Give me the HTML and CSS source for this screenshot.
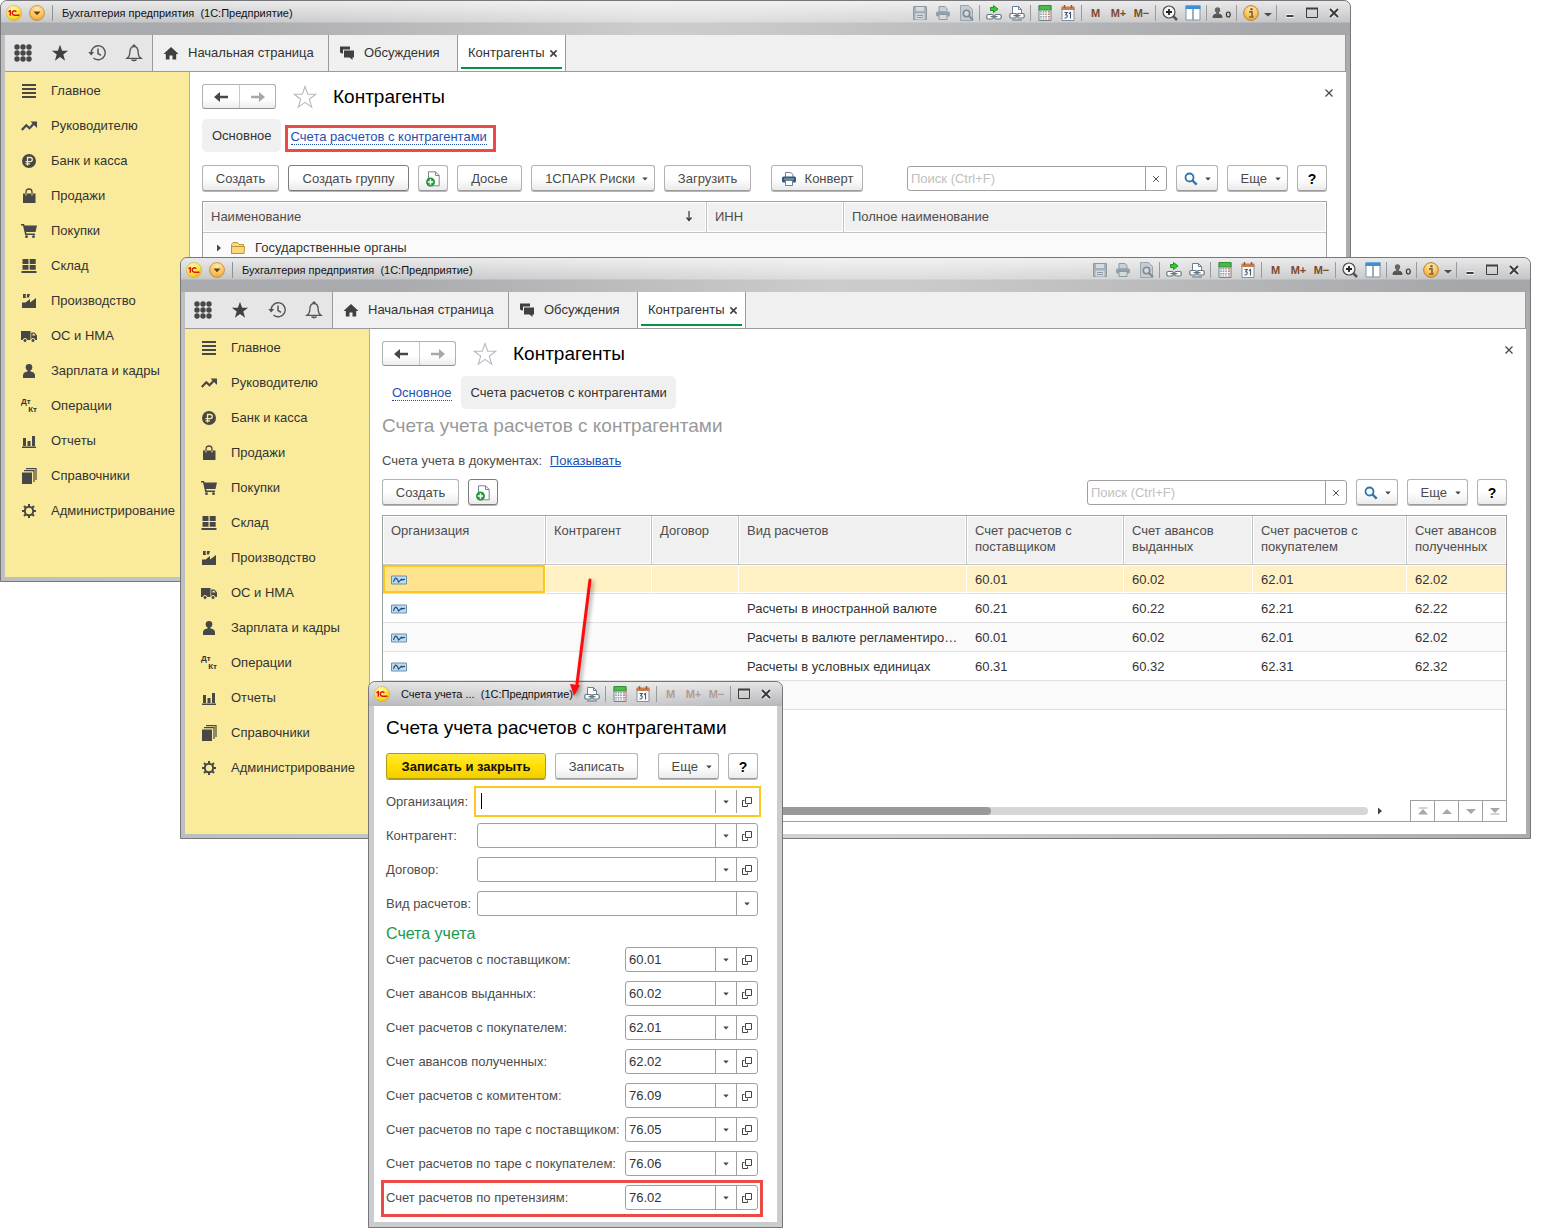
FILE: index.html
```html
<!DOCTYPE html>
<html lang="ru">
<head>
<meta charset="utf-8">
<meta name="viewport" content="width=device-width, initial-scale=1">
<title>Бухгалтерия предприятия (1С:Предприятие)</title>
<link rel="stylesheet" href="styles.css">
</head>
<body>
<svg class="sprite" aria-hidden="true">
  <defs>
    <radialGradient id="g-yellow" cx="40%" cy="30%" r="75%"><stop offset="0" stop-color="#fffbc0"/><stop offset=".6" stop-color="#fde43c"/><stop offset="1" stop-color="#e9b800"/></radialGradient>
    <radialGradient id="g-orange" cx="50%" cy="25%" r="80%"><stop offset="0" stop-color="#ffe9b0"/><stop offset=".6" stop-color="#fbc25a"/><stop offset="1" stop-color="#e89c2c"/></radialGradient>
  </defs>
  <symbol id="logo" viewBox="0 0 16 16"><circle cx="8" cy="8" r="7.6" fill="url(#g-yellow)" stroke="#c9a94a" stroke-width=".5"/><path d="M2.400 6.600 4.300 5.700V10.800M10.300 6.900A2.200 2.200 0 1 0 8.500 10.200H13.500" fill="none" stroke="#e0150c" stroke-width="1.500"/></symbol>
  <symbol id="menu-down" viewBox="0 0 16 16"><circle cx="8" cy="8" r="7.5" fill="url(#g-orange)" stroke="#b98632" stroke-width=".7"/><path d="M4.500 6.500h7L8 10.200z" fill="#6b3d10"/></symbol>
  <symbol id="save" viewBox="0 0 16 16"><path d="M1.5 1.5h13v13h-13z" fill="#a5b2bb" stroke="#8d9aa4"/><path d="M4 2h8v4H4z" fill="#d5dadd"/><path d="M3.500 8.500h9v6h-9z" fill="#d5dadd"/><path d="M5 10.500h6M5 12.500h6" stroke="#8d9aa4"/></symbol>
  <symbol id="print-off" viewBox="0 0 16 16"><path d="M4 1.500h6l2 2V7H4z" fill="#c9cfd3" stroke="#8d9aa4"/><rect x="1" y="6.500" width="14" height="5" rx="1.500" fill="#93a1ab"/><path d="M4 9.500h8v5H4z" fill="#d5dadd" stroke="#8d9aa4"/></symbol>
  <symbol id="preview" viewBox="0 0 16 16"><path d="M2.500.5h8l4 4v11h-12z" fill="#c6cdd2" stroke="#9aa6af"/><circle cx="8.500" cy="8.500" r="3.200" fill="#d5dadd" stroke="#7d8b96" stroke-width="1.600"/><path d="m11 11 4 4" stroke="#7d8b96" stroke-width="2"/></symbol>
  <symbol id="link-add" viewBox="0 0 16 16"><path d="M4.500 2.500h3V.5L12 4 7.500 7.500v-2h-3z" fill="#2bd02b" stroke="#0c7a12" stroke-width=".8"/><rect x=".8" y="9.500" width="6.500" height="4.500" rx="1.500" fill="#fff" stroke="#647681" stroke-width="1.200"/><rect x="8.700" y="9.500" width="6.500" height="4.500" rx="1.500" fill="#fff" stroke="#647681" stroke-width="1.200"/><path d="M4.500 11.700h7" stroke="#647681" stroke-width="1.200"/></symbol>
  <symbol id="print-link" viewBox="0 0 16 16"><path d="M3.500 9V1.500h6l3 3V9z" fill="#fff" stroke="#6f7f92"/><path d="M9.500 1.500v3h3" fill="none" stroke="#6f7f92"/><rect x=".8" y="8.500" width="6.500" height="4.500" rx="1.500" fill="#fff" stroke="#647681" stroke-width="1.200"/><rect x="8.700" y="8.500" width="6.500" height="4.500" rx="1.500" fill="#fff" stroke="#647681" stroke-width="1.200"/><path d="M4.500 10.700h7M3 15h10" stroke="#647681" stroke-width="1.200"/></symbol>
  <symbol id="calc" viewBox="0 0 16 16"><path d="M2 .5h12v15H2z" fill="#f4f6f7" stroke="#75838c"/><path d="M2 .5h12V5H2z" fill="#4eb84c" stroke="#2f9233"/><path d="M4 6v8.500M6.500 6v8.500M9 6v8.500" stroke="#8a98a1" stroke-width="1.500" stroke-dasharray="1.500 1"/><path d="M12 6v8.500" stroke="#df4f42" stroke-width="1.500" stroke-dasharray="1.500 1"/></symbol>
  <symbol id="calendar" viewBox="0 0 16 16"><path d="M2 2.500h12v13H2z" fill="#f7f9fb" stroke="#8094a8"/><path d="M1.500 1.500h13V5h-13z" fill="#c77e4f"/><path d="M4.500 0v3M11.500 0v3" stroke="#9a5a34" stroke-width="1.500"/><path d="M4.500 7.500h2.700l-1.500 2.200q1.800 0 1.500 1.800T4.500 13M9 8.500l1.500-1V13.500" fill="none" stroke="#46586a" stroke-width="1.100"/></symbol>
  <symbol id="zoom" viewBox="0 0 16 16"><circle cx="7" cy="7" r="6" fill="#f4f4f4" stroke="#4a4a4a" stroke-width="1.200"/><path d="M7 4v6M4 7h6" stroke="#222" stroke-width="1.800"/><path d="m11.500 11.500 3.500 3.500" stroke="#555" stroke-width="2.500"/></symbol>
  <symbol id="split" viewBox="0 0 16 16"><path d="M1 1h14v14H1z" fill="#fff" stroke="#7d93a6"/><path d="M.5.5h15V4H.5z" fill="#3e8fd8"/><path d="M8 4v11" stroke="#7d93a6" stroke-width="1.500"/></symbol>
  <symbol id="user-off" viewBox="0 0 20 16"><circle cx="5.500" cy="5" r="2.700" fill="#666"/><path d="M4.500 7h2v2q3.500.5 3.500 2.500v1H1v-1Q1 9.500 4.500 9z" fill="#555" stroke="#555"/><path d="M4 5h3v4.500H4z" fill="#666"/><ellipse cx="16.300" cy="9.500" rx="1.900" ry="2.500" fill="none" stroke="#3a3020" stroke-width="1.200"/></symbol>
  <symbol id="info" viewBox="0 0 16 16"><circle cx="8" cy="8" r="7.400" fill="url(#g-orange)" stroke="#b98632"/><circle cx="8.500" cy="4.300" r="1.300" fill="#7c6a45"/><path d="M6 6.800h3v4.700h1.500M6 12h4.500" fill="none" stroke="#7c6a45" stroke-width="1.700"/></symbol>
  <symbol id="tiny-down" viewBox="0 0 8 8"><path d="M0 4h8L4 7.500z" fill="#4a4a4a"/></symbol>
  <symbol id="win-min" viewBox="0 0 16 16"><path d="M4 11h8" stroke="#f2f2f2" stroke-width="4"/><path d="M4.500 11h7" stroke="#3e3e3e" stroke-width="2"/></symbol>
  <symbol id="win-max" viewBox="0 0 16 16"><path d="M2.500 3.500h11v9h-11z" fill="none" stroke="#3e3e3e"/><path d="M2 3.500h12" stroke="#3e3e3e" stroke-width="2"/></symbol>
  <symbol id="win-close" viewBox="0 0 16 16"><path d="m4 4 8 8m0-8-8 8" stroke="#f2f2f2" stroke-width="4"/><path d="m4 4 8 8m0-8-8 8" stroke="#3e3e3e" stroke-width="2.200"/></symbol>

  <symbol id="apps" viewBox="0 0 18 18"><g fill="#474747"><circle cx="3" cy="3" r="2.700"/><circle cx="9" cy="3" r="2.700"/><circle cx="15" cy="3" r="2.700"/><circle cx="3" cy="9" r="2.700"/><circle cx="9" cy="9" r="2.700"/><circle cx="15" cy="9" r="2.700"/><circle cx="3" cy="15" r="2.700"/><circle cx="9" cy="15" r="2.700"/><circle cx="15" cy="15" r="2.700"/></g></symbol>
  <symbol id="star" viewBox="0 0 18 18"><path d="m9 .8 2.100 6h6l-4.800 3.800 1.800 6.200L9 13.100l-5.100 3.700 1.800-6.200L.9 6.800h6z" fill="#404040"/></symbol>
  <symbol id="clock" viewBox="0 0 18 18"><path d="M3.200 9.500A7 7 0 1 1 5.500 14" fill="none" stroke="#555" stroke-width="1.400"/><path d="M.3 8h5.900L3.200 11.500z" fill="#555"/><path d="M10 4.500v5l3 1.800" fill="none" stroke="#555" stroke-width="1.500"/></symbol>
  <symbol id="bell" viewBox="0 0 18 18"><path d="M2 14.300q2.800-2 2.800-5.300Q4.800 2.500 9 2.500t4.200 6.500q0 3.300 2.800 5.300z" fill="none" stroke="#555" stroke-width="1.300"/><path d="M8 2.500V1h2v1.500M6.500 16h5q-2.500 2-5 0" fill="#555" stroke="#555"/></symbol>
  <symbol id="home" viewBox="0 0 16 16"><path d="M8 2 .5 9h2.300v5.500H6.500v-4h3v4h3.700V9h2.300z" fill="#404040"/></symbol>
  <symbol id="chat" viewBox="0 0 16 16"><path d="M1 1.500h10v3H4v4H3L1 7.500z" fill="#404040"/><path d="M5 5.500h10v7h-1.500V15l-3-2.500H5z" fill="#404040"/></symbol>

  <symbol id="s-main" viewBox="0 0 16 16"><path d="M1 2h14M1 6h14M1 10h14M1 14h14" stroke="#474747" stroke-width="2"/></symbol>
  <symbol id="s-trend" viewBox="0 0 16 16"><path d="m.8 12 4.500-4.700 3.200 3L13 5.500" fill="none" stroke="#474747" stroke-width="2.200"/><path d="M9.500 3.500H16V10z" fill="#474747"/></symbol>
  <symbol id="s-ruble" viewBox="0 0 16 16"><circle cx="8" cy="8" r="7" fill="#474747"/><path d="M6.500 12.500v-8h2.800q2 0 2 2.100t-2 2.100H4.500M4.500 10.800h4.500" fill="none" stroke="#faeb9c" stroke-width="1.300"/></symbol>
  <symbol id="s-bag" viewBox="0 0 16 16"><path d="M2 5.500h12.500V15H2z" fill="#474747"/><path d="M5 8V4q0-3 3-3t3 3v4" fill="none" stroke="#474747" stroke-width="1.300"/><path d="M5 5.500v2M11 5.500v2" stroke="#faeb9c"/></symbol>
  <symbol id="s-cart" viewBox="0 0 16 16"><path d="M0 1h3l.6 1.500H16L14.500 9H5l.5 1.500H14V12H4.200L2 2.500H0z" fill="#474747"/><circle cx="5.500" cy="13.700" r="1.400" fill="#474747"/><circle cx="12.500" cy="13.700" r="1.400" fill="#474747"/></symbol>
  <symbol id="s-stock" viewBox="0 0 16 16"><path d="M1.500 1h6v5h-6zM8.700 1h6v5h-6zM1.500 7h6v4.700h-6zM8.700 7h6v4.700h-6zM.5 13h15v2H.5z" fill="#474747"/></symbol>
  <symbol id="s-plant" viewBox="0 0 16 16"><path d="M1 15V9.500h3.500L9 6v3.500L15 5v10zM2 1h3l-.5 2L5 5H2zM6 1h3L8 4.500H5.800z" fill="#474747"/></symbol>
  <symbol id="s-truck" viewBox="0 0 16 16"><path d="M0 3h9.500v9H0zM10.200 4.500h3.300L16 7.500V12h-5.800z" fill="#474747"/><circle cx="4" cy="12.500" r="2" fill="#474747" stroke="#faeb9c"/><circle cx="12" cy="12.500" r="2" fill="#474747" stroke="#faeb9c"/><path d="M11.500 5.700h1.800l1.200 1.800h-3z" fill="#faeb9c"/></symbol>
  <symbol id="s-person" viewBox="0 0 16 16"><circle cx="8" cy="4.300" r="3.300" fill="#474747"/><path d="M6.500 6h3v2.500q4.500.5 4.500 4V15H2v-2.500q0-3.500 4.500-4z" fill="#474747"/></symbol>
  <symbol id="s-bars" viewBox="0 0 16 16"><path d="M1 13.500h14V15H1zM2 5h3v8H2zM6.500 8h3v5h-3zM11 3h3v10h-3z" fill="#474747"/></symbol>
  <symbol id="s-books" viewBox="0 0 16 16"><path d="M1 4.500h10V16H1z" fill="#474747"/><path d="M3 2.700h10V14M5 .700h10V12" fill="none" stroke="#474747" stroke-width="1.200"/></symbol>
  <symbol id="s-gear" viewBox="0 0 16 16"><circle cx="8" cy="8" r="4.200" fill="none" stroke="#474747" stroke-width="2"/><path d="M8 1v3M8 12v3M1 8h3M12 8h3M3 3l2 2M11 11l2 2M13 3l-2 2M5 11l-2 2" stroke="#474747" stroke-width="2"/></symbol>

  <symbol id="arrow-left" viewBox="0 0 16 12"><path d="M1 6 7 1v3.800h8v2.400H7V11z" fill="#474747"/></symbol>
  <symbol id="arrow-right" viewBox="0 0 16 12"><path d="M15 6 9 1v3.800H1v2.400h8V11z" fill="#a8a8a8"/></symbol>
  <symbol id="fav" viewBox="0 0 24 24"><path d="m12 1.500 2.700 7.800h8l-6.400 4.900 2.400 8L12 17.400l-6.700 4.800 2.400-8L1.300 9.300h8z" fill="none" stroke="#b4bac2" stroke-width="1.100"/></symbol>
  <symbol id="x" viewBox="0 0 10 10"><path d="m1.500 1.500 7 7m0-7-7 7" stroke="#444" stroke-width="1.200"/></symbol>
  <symbol id="x-bold" viewBox="0 0 10 10"><path d="m1.500 1.500 7 7m0-7-7 7" stroke="#444" stroke-width="1.800"/></symbol>
  <symbol id="doc-add" viewBox="0 0 16 16"><path d="M3.500.8h7l3.700 3.700v10.300H3.500z" fill="#fff" stroke="#76869a"/><path d="M10.500.8v3.700h3.700" fill="none" stroke="#76869a"/><circle cx="5.500" cy="11" r="4.500" fill="#23993a"/><path d="M5.500 8.300v5.400M2.800 11h5.400" stroke="#fff" stroke-width="1.500"/></symbol>
  <symbol id="print" viewBox="0 0 16 16"><path d="M4.500 6V1.500h5l2.500 2V6" fill="#fff" stroke="#6d7f92"/><rect x="1" y="5.500" width="14" height="6" rx="1.500" fill="#33597d"/><path d="M4.500 9.500h7v5h-7z" fill="#fff" stroke="#6d7f92"/><path d="M3 8h10" stroke="#9db6ca"/></symbol>
  <symbol id="search" viewBox="0 0 14 14"><circle cx="5.500" cy="5.500" r="4" fill="none" stroke="#2f74ad" stroke-width="1.800"/><path d="m8.500 8.500 4.200 4.200" stroke="#2f74ad" stroke-width="2.400"/></symbol>
  <symbol id="caret" viewBox="0 0 6 4"><path d="M.3.500h5.400L3 3.500z" fill="#444"/></symbol>
  <symbol id="sort" viewBox="0 0 8 12"><path d="M4 1v9M1.500 7.500 4 10.500l2.500-3" fill="none" stroke="#333" stroke-width="1.200"/></symbol>
  <symbol id="tree" viewBox="0 0 6 8"><path d="M1 .500v7L5 4z" fill="#444"/></symbol>
  <symbol id="folder" viewBox="0 0 16 14"><path d="M1.500 12.500V3.500L3 1.500h4.500L9 3.500h4.500v9z" fill="#f7dc8b" stroke="#bf9433"/><path d="M1.500 5.500h13l-.5 7H1.500z" fill="#fbd77a" stroke="#bf9433"/></symbol>
  <symbol id="record" viewBox="0 0 16 10"><path d="M.5 1h15v8H.5z" fill="#bcdcf1" stroke="#6f8ea8"/><path d="M2.500 7Q4 2 5.500 3.500T7.500 7Q9 6 10 4.500q1-1 1 .5 2-1 3-.5" fill="none" stroke="#1c4a7a" stroke-width="1.100"/></symbol>
  <symbol id="open" viewBox="0 0 10 10"><path d="M3.500.500h6v6h-6z" fill="none" stroke="#444"/><path d="M2.500 3.500h-2v6h5v-2" fill="none" stroke="#444"/></symbol>
  <symbol id="go-first" viewBox="0 0 10 8"><path d="M.500 1h9" stroke="#a8a8a8"/><path d="M0 7.500 5 2l5 5.500z" fill="#a8a8a8"/></symbol>
  <symbol id="go-up" viewBox="0 0 10 8"><path d="M0 7 5 2l5 5z" fill="#a8a8a8"/></symbol>
  <symbol id="go-down" viewBox="0 0 10 8"><path d="M0 2h10L5 7z" fill="#a8a8a8"/></symbol>
  <symbol id="go-last" viewBox="0 0 10 8"><path d="M0 1h10L5 6z" fill="#a8a8a8"/><path d="M.500 7h9" stroke="#a8a8a8"/></symbol>
</svg>

<main class="desktop">

  <section class="window window-list" aria-label="Контрагенты">
    <header class="titlebar">
      <svg class="badge"><use href="#logo"/></svg>
      <svg class="badge"><use href="#menu-down"/></svg>
      <span class="title-sep"></span>
      <span class="title-text">Бухгалтерия предприятия&nbsp; (1С:Предприятие)</span>
      <button class="tool" aria-label="Сохранить"><svg><use href="#save"/></svg></button>
      <button class="tool" aria-label="Печать"><svg><use href="#print-off"/></svg></button>
      <button class="tool" aria-label="Просмотр"><svg><use href="#preview"/></svg></button>
      <span class="sep"></span>
      <button class="tool" aria-label="Перейти по ссылке"><svg><use href="#link-add"/></svg></button>
      <button class="tool" aria-label="Получить ссылку"><svg><use href="#print-link"/></svg></button>
      <span class="sep"></span>
      <button class="tool" aria-label="Калькулятор"><svg><use href="#calc"/></svg></button>
      <button class="tool" aria-label="Календарь"><svg><use href="#calendar"/></svg></button>
      <span class="sep"></span>
      <button class="tool mem">M</button>
      <button class="tool mem">M+</button>
      <button class="tool mem">M−</button>
      <span class="sep"></span>
      <button class="tool" aria-label="Масштаб"><svg><use href="#zoom"/></svg></button>
      <button class="tool" aria-label="Панели"><svg><use href="#split"/></svg></button>
      <span class="sep"></span>
      <button class="tool user" aria-label="Пользователь"><svg><use href="#user-off"/></svg></button>
      <span class="sep"></span>
      <button class="tool" aria-label="Информация"><svg><use href="#info"/></svg></button>
      <button class="tool more" aria-label="Дополнительно"><svg><use href="#tiny-down"/></svg></button>
      <span class="sep"></span>
      <button class="tool win" aria-label="Свернуть"><svg><use href="#win-min"/></svg></button>
      <button class="tool win" aria-label="Развернуть"><svg><use href="#win-max"/></svg></button>
      <button class="tool win" aria-label="Закрыть"><svg><use href="#win-close"/></svg></button>
    </header>
    <nav class="tabs">
      <div class="quick">
        <button aria-label="Меню"><svg><use href="#apps"/></svg></button>
        <button aria-label="Избранное"><svg><use href="#star"/></svg></button>
        <button aria-label="История"><svg><use href="#clock"/></svg></button>
        <button aria-label="Оповещения"><svg><use href="#bell"/></svg></button>
      </div>
      <button class="tab tab-home"><svg><use href="#home"/></svg>Начальная страница</button>
      <button class="tab tab-chat"><svg><use href="#chat"/></svg>Обсуждения</button>
      <button class="tab tab-active">Контрагенты<svg class="tab-x"><use href="#x-bold"/></svg></button>
    </nav>
    <div class="body">
      <nav class="sidebar">
        <a href="#"><svg><use href="#s-main"/></svg>Главное</a>
        <a href="#"><svg><use href="#s-trend"/></svg>Руководителю</a>
        <a href="#"><svg><use href="#s-ruble"/></svg>Банк и касса</a>
        <a href="#"><svg><use href="#s-bag"/></svg>Продажи</a>
        <a href="#"><svg><use href="#s-cart"/></svg>Покупки</a>
        <a href="#"><svg><use href="#s-stock"/></svg>Склад</a>
        <a href="#"><svg><use href="#s-plant"/></svg>Производство</a>
        <a href="#"><svg><use href="#s-truck"/></svg>ОС и НМА</a>
        <a href="#"><svg><use href="#s-person"/></svg>Зарплата и кадры</a>
        <a href="#"><span class="dtkt"><span>Дт</span><span>Кт</span></span>Операции</a>
        <a href="#"><svg><use href="#s-bars"/></svg>Отчеты</a>
        <a href="#"><svg><use href="#s-books"/></svg>Справочники</a>
        <a href="#"><svg><use href="#s-gear"/></svg>Администрирование</a>
      </nav>
      <div class="page">
        <div class="page-head">
          <div class="history">
            <button aria-label="Назад"><svg><use href="#arrow-left"/></svg></button>
            <button aria-label="Вперед"><svg><use href="#arrow-right"/></svg></button>
          </div>
          <svg class="fav"><use href="#fav"/></svg>
          <h1>Контрагенты</h1>
          <button class="page-close" aria-label="Закрыть"><svg><use href="#x"/></svg></button>
        </div>
        <div class="subtabs">
          <span class="subtab subtab-on">Основное</span>
          <span class="marked"><a href="#">Счета расчетов с контрагентами</a></span>
        </div>
        <div class="toolbar">
          <button class="btn w-create">Создать</button>
          <button class="btn btn-dark w-group">Создать группу</button>
          <button class="btn w-icon" aria-label="Создать копированием"><svg><use href="#doc-add"/></svg></button>
          <button class="btn w-dossier">Досье</button>
          <button class="btn btn-menu w-spark">1СПАРК Риски<svg class="caret"><use href="#caret"/></svg></button>
          <button class="btn w-load">Загрузить</button>
          <button class="btn btn-print w-print"><svg><use href="#print"/></svg>Конверт</button>
          <div class="searchbox">
            <input type="text" placeholder="Поиск (Ctrl+F)" aria-label="Поиск">
            <button aria-label="Очистить"><svg><use href="#x"/></svg></button>
          </div>
          <button class="btn btn-menu w-find" aria-label="Найти"><svg class="lens"><use href="#search"/></svg><svg class="caret"><use href="#caret"/></svg></button>
          <button class="btn btn-menu w-more">Еще<svg class="caret"><use href="#caret"/></svg></button>
          <button class="btn btn-help w-icon">?</button>
        </div>
        <div class="grid-box">
          <table class="grid">
            <colgroup><col class="c-name"><col class="c-inn"><col></colgroup>
            <thead>
              <tr><th><span class="sorted">Наименование<svg><use href="#sort"/></svg></span></th><th>ИНН</th><th>Полное наименование</th></tr>
            </thead>
            <tbody>
              <tr class="shade"><td colspan="3"><span class="node"><svg class="tree"><use href="#tree"/></svg><svg class="folder"><use href="#folder"/></svg>Государственные органы</span></td></tr>
            </tbody>
          </table>
        </div>
      </div>
    </div>
  </section>

  <section class="window window-accounts" aria-label="Счета расчетов с контрагентами">
    <header class="titlebar">
      <svg class="badge"><use href="#logo"/></svg>
      <svg class="badge"><use href="#menu-down"/></svg>
      <span class="title-sep"></span>
      <span class="title-text">Бухгалтерия предприятия&nbsp; (1С:Предприятие)</span>
      <button class="tool" aria-label="Сохранить"><svg><use href="#save"/></svg></button>
      <button class="tool" aria-label="Печать"><svg><use href="#print-off"/></svg></button>
      <button class="tool" aria-label="Просмотр"><svg><use href="#preview"/></svg></button>
      <span class="sep"></span>
      <button class="tool" aria-label="Перейти по ссылке"><svg><use href="#link-add"/></svg></button>
      <button class="tool" aria-label="Получить ссылку"><svg><use href="#print-link"/></svg></button>
      <span class="sep"></span>
      <button class="tool" aria-label="Калькулятор"><svg><use href="#calc"/></svg></button>
      <button class="tool" aria-label="Календарь"><svg><use href="#calendar"/></svg></button>
      <span class="sep"></span>
      <button class="tool mem">M</button>
      <button class="tool mem">M+</button>
      <button class="tool mem">M−</button>
      <span class="sep"></span>
      <button class="tool" aria-label="Масштаб"><svg><use href="#zoom"/></svg></button>
      <button class="tool" aria-label="Панели"><svg><use href="#split"/></svg></button>
      <span class="sep"></span>
      <button class="tool user" aria-label="Пользователь"><svg><use href="#user-off"/></svg></button>
      <span class="sep"></span>
      <button class="tool" aria-label="Информация"><svg><use href="#info"/></svg></button>
      <button class="tool more" aria-label="Дополнительно"><svg><use href="#tiny-down"/></svg></button>
      <span class="sep"></span>
      <button class="tool win" aria-label="Свернуть"><svg><use href="#win-min"/></svg></button>
      <button class="tool win" aria-label="Развернуть"><svg><use href="#win-max"/></svg></button>
      <button class="tool win" aria-label="Закрыть"><svg><use href="#win-close"/></svg></button>
    </header>
    <nav class="tabs">
      <div class="quick">
        <button aria-label="Меню"><svg><use href="#apps"/></svg></button>
        <button aria-label="Избранное"><svg><use href="#star"/></svg></button>
        <button aria-label="История"><svg><use href="#clock"/></svg></button>
        <button aria-label="Оповещения"><svg><use href="#bell"/></svg></button>
      </div>
      <button class="tab tab-home"><svg><use href="#home"/></svg>Начальная страница</button>
      <button class="tab tab-chat"><svg><use href="#chat"/></svg>Обсуждения</button>
      <button class="tab tab-active">Контрагенты<svg class="tab-x"><use href="#x-bold"/></svg></button>
    </nav>
    <div class="body">
      <nav class="sidebar">
        <a href="#"><svg><use href="#s-main"/></svg>Главное</a>
        <a href="#"><svg><use href="#s-trend"/></svg>Руководителю</a>
        <a href="#"><svg><use href="#s-ruble"/></svg>Банк и касса</a>
        <a href="#"><svg><use href="#s-bag"/></svg>Продажи</a>
        <a href="#"><svg><use href="#s-cart"/></svg>Покупки</a>
        <a href="#"><svg><use href="#s-stock"/></svg>Склад</a>
        <a href="#"><svg><use href="#s-plant"/></svg>Производство</a>
        <a href="#"><svg><use href="#s-truck"/></svg>ОС и НМА</a>
        <a href="#"><svg><use href="#s-person"/></svg>Зарплата и кадры</a>
        <a href="#"><span class="dtkt"><span>Дт</span><span>Кт</span></span>Операции</a>
        <a href="#"><svg><use href="#s-bars"/></svg>Отчеты</a>
        <a href="#"><svg><use href="#s-books"/></svg>Справочники</a>
        <a href="#"><svg><use href="#s-gear"/></svg>Администрирование</a>
      </nav>
      <div class="page">
        <div class="page-head">
          <div class="history">
            <button aria-label="Назад"><svg><use href="#arrow-left"/></svg></button>
            <button aria-label="Вперед"><svg><use href="#arrow-right"/></svg></button>
          </div>
          <svg class="fav"><use href="#fav"/></svg>
          <h1>Контрагенты</h1>
          <button class="page-close" aria-label="Закрыть"><svg><use href="#x"/></svg></button>
        </div>
        <div class="subtabs">
          <span class="subtab"><a href="#">Основное</a></span>
          <span class="subtab subtab-on">Счета расчетов с контрагентами</span>
        </div>
        <h2 class="list-title">Счета учета расчетов с контрагентами</h2>
        <p class="doc-line">Счета учета в документах: <a href="#">Показывать</a></p>
        <div class="toolbar">
          <button class="btn w-create">Создать</button>
          <button class="btn btn-dark w-icon" aria-label="Создать копированием"><svg><use href="#doc-add"/></svg></button>
          <div class="searchbox">
            <input type="text" placeholder="Поиск (Ctrl+F)" aria-label="Поиск">
            <button aria-label="Очистить"><svg><use href="#x"/></svg></button>
          </div>
          <button class="btn btn-menu w-find" aria-label="Найти"><svg class="lens"><use href="#search"/></svg><svg class="caret"><use href="#caret"/></svg></button>
          <button class="btn btn-menu w-more">Еще<svg class="caret"><use href="#caret"/></svg></button>
          <button class="btn btn-help w-icon">?</button>
        </div>
        <div class="grid-box">
          <table class="grid grid-accounts">
            <colgroup><col class="c-org"><col class="c-agent"><col class="c-deal"><col class="c-kind"><col class="c-a1"><col class="c-a2"><col class="c-a3"><col></colgroup>
            <thead>
              <tr><th>Организация</th><th>Контрагент</th><th>Договор</th><th>Вид расчетов</th><th>Счет расчетов с поставщиком</th><th>Счет авансов выданных</th><th>Счет расчетов с покупателем</th><th>Счет авансов полученных</th></tr>
            </thead>
            <tbody>
              <tr class="selected"><td class="current"><svg><use href="#record"/></svg></td><td></td><td></td><td></td><td>60.01</td><td>60.02</td><td>62.01</td><td>62.02</td></tr>
              <tr><td><svg><use href="#record"/></svg></td><td></td><td></td><td>Расчеты в иностранной валюте</td><td>60.21</td><td>60.22</td><td>62.21</td><td>62.22</td></tr>
              <tr class="shade"><td><svg><use href="#record"/></svg></td><td></td><td></td><td>Расчеты в валюте регламентиро…</td><td>60.01</td><td>60.02</td><td>62.01</td><td>62.02</td></tr>
              <tr><td><svg><use href="#record"/></svg></td><td></td><td></td><td>Расчеты в условных единицах</td><td>60.31</td><td>60.32</td><td>62.31</td><td>62.32</td></tr>
              <tr class="shade"><td colspan="8"></td></tr>
            </tbody>
          </table>
          <div class="grid-foot">
            <div class="track"><div class="thumb"></div></div>
            <svg class="tree"><use href="#tree"/></svg>
            <div class="pager">
              <button aria-label="В начало"><svg><use href="#go-first"/></svg></button>
              <button aria-label="Вверх"><svg><use href="#go-up"/></svg></button>
              <button aria-label="Вниз"><svg><use href="#go-down"/></svg></button>
              <button aria-label="В конец"><svg><use href="#go-last"/></svg></button>
            </div>
          </div>
        </div>
      </div>
    </div>
  </section>

  <section class="window window-form" aria-label="Счета учета расчетов с контрагентами">
    <header class="titlebar titlebar-form">
      <svg class="badge"><use href="#logo"/></svg>
      <span class="title-text">Счета учета ...&nbsp; (1С:Предприятие)</span>
      <button class="tool" aria-label="Получить ссылку"><svg><use href="#print-link"/></svg></button>
      <span class="sep"></span>
      <button class="tool" aria-label="Калькулятор"><svg><use href="#calc"/></svg></button>
      <button class="tool" aria-label="Календарь"><svg><use href="#calendar"/></svg></button>
      <span class="sep"></span>
      <button class="tool mem" disabled>M</button>
      <button class="tool mem" disabled>M+</button>
      <button class="tool mem" disabled>M−</button>
      <span class="sep"></span>
      <button class="tool win" aria-label="Развернуть"><svg><use href="#win-max"/></svg></button>
      <button class="tool win" aria-label="Закрыть"><svg><use href="#win-close"/></svg></button>
    </header>
    <form class="form">
      <h2>Счета учета расчетов с контрагентами</h2>
      <div class="toolbar">
        <button type="button" class="btn btn-primary w-save-close">Записать и закрыть</button>
        <button type="button" class="btn w-save">Записать</button>
        <button type="button" class="btn btn-menu w-more push">Еще<svg class="caret"><use href="#caret"/></svg></button>
        <button type="button" class="btn btn-help w-icon">?</button>
      </div>
      <div class="row">
        <label for="f-org">Организация:</label>
        <div class="field field-focus"><input id="f-org" type="text"><span class="cursor"></span><button type="button" aria-label="Выбрать"><svg class="caret"><use href="#caret"/></svg></button><button type="button" aria-label="Открыть"><svg class="open"><use href="#open"/></svg></button></div>
      </div>
      <div class="row">
        <label for="f-agent">Контрагент:</label>
        <div class="field"><input id="f-agent" type="text"><button type="button" aria-label="Выбрать"><svg class="caret"><use href="#caret"/></svg></button><button type="button" aria-label="Открыть"><svg class="open"><use href="#open"/></svg></button></div>
      </div>
      <div class="row">
        <label for="f-deal">Договор:</label>
        <div class="field"><input id="f-deal" type="text"><button type="button" aria-label="Выбрать"><svg class="caret"><use href="#caret"/></svg></button><button type="button" aria-label="Открыть"><svg class="open"><use href="#open"/></svg></button></div>
      </div>
      <div class="row">
        <label for="f-kind">Вид расчетов:</label>
        <div class="field"><input id="f-kind" type="text"><button type="button" aria-label="Выбрать"><svg class="caret"><use href="#caret"/></svg></button></div>
      </div>
      <h3>Счета учета</h3>
      <div class="row row-account">
        <label for="a1">Счет расчетов с поставщиком:</label>
        <div class="field"><input id="a1" type="text" value="60.01"><button type="button" aria-label="Выбрать"><svg class="caret"><use href="#caret"/></svg></button><button type="button" aria-label="Открыть"><svg class="open"><use href="#open"/></svg></button></div>
      </div>
      <div class="row row-account">
        <label for="a2">Счет авансов выданных:</label>
        <div class="field"><input id="a2" type="text" value="60.02"><button type="button" aria-label="Выбрать"><svg class="caret"><use href="#caret"/></svg></button><button type="button" aria-label="Открыть"><svg class="open"><use href="#open"/></svg></button></div>
      </div>
      <div class="row row-account">
        <label for="a3">Счет расчетов с покупателем:</label>
        <div class="field"><input id="a3" type="text" value="62.01"><button type="button" aria-label="Выбрать"><svg class="caret"><use href="#caret"/></svg></button><button type="button" aria-label="Открыть"><svg class="open"><use href="#open"/></svg></button></div>
      </div>
      <div class="row row-account">
        <label for="a4">Счет авансов полученных:</label>
        <div class="field"><input id="a4" type="text" value="62.02"><button type="button" aria-label="Выбрать"><svg class="caret"><use href="#caret"/></svg></button><button type="button" aria-label="Открыть"><svg class="open"><use href="#open"/></svg></button></div>
      </div>
      <div class="row row-account">
        <label for="a5">Счет расчетов с комитентом:</label>
        <div class="field"><input id="a5" type="text" value="76.09"><button type="button" aria-label="Выбрать"><svg class="caret"><use href="#caret"/></svg></button><button type="button" aria-label="Открыть"><svg class="open"><use href="#open"/></svg></button></div>
      </div>
      <div class="row row-account">
        <label for="a6">Счет расчетов по таре с поставщиком:</label>
        <div class="field"><input id="a6" type="text" value="76.05"><button type="button" aria-label="Выбрать"><svg class="caret"><use href="#caret"/></svg></button><button type="button" aria-label="Открыть"><svg class="open"><use href="#open"/></svg></button></div>
      </div>
      <div class="row row-account">
        <label for="a7">Счет расчетов по таре с покупателем:</label>
        <div class="field"><input id="a7" type="text" value="76.06"><button type="button" aria-label="Выбрать"><svg class="caret"><use href="#caret"/></svg></button><button type="button" aria-label="Открыть"><svg class="open"><use href="#open"/></svg></button></div>
      </div>
      <div class="row row-account row-marked">
        <label for="a8">Счет расчетов по претензиям:</label>
        <div class="field"><input id="a8" type="text" value="76.02"><button type="button" aria-label="Выбрать"><svg class="caret"><use href="#caret"/></svg></button><button type="button" aria-label="Открыть"><svg class="open"><use href="#open"/></svg></button></div>
      </div>
    </form>
  </section>

  <svg class="pointer" viewBox="0 0 32 124" aria-hidden="true">
    <path d="M24 5 11 109" stroke="#ff0b0b" stroke-width="3" stroke-linecap="round" fill="none"/>
    <path d="m4 109 10 1.200L8 121z" fill="#ff0b0b"/>
  </svg>
</main>
</body>
</html>
```

FILE: styles.css
```css
* { box-sizing: border-box; }

body {
  margin: 0;
  background: #fff;
  color: #333;
  font: 13px/16px "Liberation Sans", Arial, sans-serif;
}

button, input { font: inherit; color: inherit; margin: 0; padding: 0; }
button { border: 0; background: none; display: flex; align-items: center; justify-content: center; }
h1, h2, h3, p { margin: 0; font-weight: normal; }
svg { display: block; flex: none; }
.sprite { position: absolute; width: 0; height: 0; }

/* Desktop: overlapping windows share one grid cell */
.desktop {
  position: relative;
  display: grid;
  align-items: start;
  justify-items: start;
}
.desktop > .window { grid-area: 1 / 1; }

.window {
  display: flex;
  flex-direction: column;
  border: 1px solid #77777a;
  border-radius: 7px 7px 0 0;
  padding: 0 4px 4px;
  background: linear-gradient(90deg, #bdbec0, #d2d3d4 50%, #abacaf);
  overflow: hidden;
}
.window-list, .window-accounts {
  width: calc(100% - 190px);
  min-height: 582px;
}
.window-accounts { margin: 257px 0 0 180px; }
.window-form {
  width: 415px;
  margin: 681px 0 2px 368px;
  padding: 0 5px 5px;
  background: #cbccce;
}

/* Title bar */
.titlebar {
  display: flex;
  align-items: center;
  height: 34px;
  margin: 0 -4px;
  padding: 0 5px 10px 5px;
  background:
    linear-gradient(180deg, rgba(255,255,255,.75), rgba(255,255,255,.35) 21px, rgba(255,255,255,0) 22px),
    linear-gradient(90deg, #a9aaad, #a9aaad 15%, #cccccc 48%, #cacaca 55%, #a6a7ab 95%);
}
.titlebar-form {
  height: 24px;
  margin: 0 -5px;
  padding-bottom: 0;
  background: linear-gradient(180deg, rgba(255,255,255,.7), rgba(255,255,255,.2)), linear-gradient(90deg, #a5a6a9, #c0c0c1 60%, #a3a4a8);
}
.badge { width: 16px; height: 16px; margin-right: 7px; }
.title-sep { width: 1px; height: 16px; margin-right: 9px; background: #909194; }
.title-text { flex: 1; font-size: 11px; color: #111; white-space: nowrap; }
.titlebar-form .title-text { padding-left: 4px; }
.tool { width: 23px; height: 22px; }
.tool svg { width: 16px; height: 16px; }
.tool.mem { color: #7b4a2b; font-weight: bold; font-size: 11px; }
.tool.mem:disabled { color: #b09c92; }
.tool.user { width: 25px; }
.tool.user svg { width: 20px; }
.tool.more { width: 12px; }
.tool.more svg { width: 8px; height: 12px; }
.tool.win { width: 22px; }
.sep { width: 1px; height: 16px; margin: 0 2px; background: #999a9d; }

/* Open-page tabs */
.tabs {
  display: flex;
  height: 37px;
  background: #f0f0f0;
  border-bottom: 1px solid #9b9b9b;
  border-right: 1px solid #9b9b9b;
}
.quick { display: flex; width: 148px; background: #e6e6e6; border-right: 1px solid #9b9b9b; }
.quick button { flex: 1; }
.quick svg { width: 18px; height: 18px; }
.tab { justify-content: flex-start; border-right: 1px solid #9b9b9b; white-space: nowrap; padding-left: 10px; }
.tab svg { width: 16px; height: 16px; margin-right: 9px; }
.tab-home { width: 176px; }
.tab-chat { width: 129px; }
.tab-active {
  width: 108px;
  background: linear-gradient(#009646, #009646) 3px 32px / 101px 2px no-repeat, #fff;
}
.tab .tab-x { width: 9px; height: 9px; margin: 0 7px 0 auto; }

/* Section panel and page */
.body { display: flex; flex: 1; background: #fff; }
.sidebar {
  width: 185px;
  padding: 1px 0 30px;
  background: #faeb9c;
  border-right: 1px solid #b8b08a;
}
.sidebar a {
  display: flex;
  align-items: center;
  gap: 14px;
  height: 35px;
  padding-left: 16px;
  color: #333;
  text-decoration: none;
  white-space: nowrap;
}
.sidebar svg { width: 16px; height: 16px; }
.dtkt {
  display: flex;
  flex-direction: column;
  width: 16px;
  font-size: 8px;
  line-height: 8px;
  font-weight: bold;
}
.dtkt span:last-child { align-self: flex-end; }

.page {
  display: flex;
  flex-direction: column;
  flex: 1;
  min-width: 0;
  padding: 12px 19px 12px 12px;
}
.page-head { display: flex; align-items: center; height: 25px; }
.history {
  display: flex;
  border: 1px solid #b0b0b0;
  border-bottom-color: #909090;
  border-radius: 3px;
  background: linear-gradient(#fff 60%, #ececec);
}
.history button { width: 36px; height: 23px; }
.history button + button { border-left: 1px solid #c8c8c8; }
.history svg { width: 16px; height: 12px; }
.fav { width: 24px; height: 24px; margin: 0 16px 0 17px; }
h1 { font-size: 19px; line-height: 24px; color: #000; }
.page-close { margin: 0 -12px 8px auto; width: 20px; height: 20px; }
.page-close svg { width: 10px; height: 10px; }

.subtabs { display: flex; align-items: center; height: 33px; margin-top: 10px; }
.subtab { padding: 0 9px 0 10px; line-height: 33px; border-radius: 5px; white-space: nowrap; }
.subtab-on { background: #f0f0f0; }
.subtabs a { color: #1e50b4; text-decoration: none; border-bottom: 1px dotted #1e50b4; }
.marked {
  height: 27px;
  margin: 5px 0 0 4px;
  padding: 1px 6px 0 3px;
  border: 3px solid #eb4a46;
  line-height: 16px;
  white-space: nowrap;
}

.list-title { margin-top: 4px; font-size: 19px; line-height: 26px; color: #999; }
.doc-line { margin: 14px 0 -3px; line-height: 16px; color: #4d4d4d; }
.doc-line a { margin-left: 4px; color: #1e50b4; }

/* Command bar */
.toolbar { display: flex; gap: 9px; margin-top: 13px; }
.btn {
  flex: none;
  height: 26px;
  padding-top: 1px;
  border: 1px solid #b2b2b2;
  border-bottom-color: #9a9a9a;
  border-radius: 3px;
  background: linear-gradient(#fff 50%, #ebebeb);
  box-shadow: 0 1px 0 #b5b5b5;
  color: #4a4a4a;
  white-space: nowrap;
}
.btn svg { width: 16px; height: 16px; }
.btn .caret, .caret { width: 6px; height: 4px; }
.btn .lens { width: 14px; height: 14px; }
.btn-dark { border-color: #7c7c7c; }
.btn-menu { justify-content: flex-end; gap: 7px; padding-right: 6px; }
.btn-help { color: #000; font-size: 14px; font-weight: bold; }
.btn-print { gap: 8px; margin-left: 11px; }
.btn-primary {
  border-color: #b59b12;
  background: linear-gradient(#ffe93c, #ffdf00 50%, #f0cf00);
  box-shadow: 0 1px 0 #a99733;
  color: #111;
  font-weight: bold;
}
.w-create { width: 77px; }
.w-group { width: 121px; }
.w-icon { width: 30px; }
.w-dossier { width: 65px; }
.w-spark { width: 124px; }
.w-load { width: 87px; }
.w-print { width: 92px; }
.w-find { width: 42px; }
.w-more { width: 61px; gap: 8px; }
.w-save-close { width: 160px; }
.w-save { width: 83px; }
.push { margin-left: auto; }

.searchbox {
  display: flex;
  width: 260px;
  height: 25px;
  margin: 1px 0 0 auto;
  border: 1px solid #a0a0a0;
  border-radius: 3px;
  background: #fff;
}
.searchbox input { flex: 1; min-width: 0; border: 0; padding: 0 3px; background: none; outline: 0; }
.searchbox input::placeholder { color: #c0c0c0; opacity: 1; }
.searchbox button { width: 21px; border-left: 1px solid #a0a0a0; }
.searchbox svg { width: 8px; height: 8px; }

/* Lists */
.grid-box {
  display: flex;
  flex-direction: column;
  justify-content: space-between;
  flex: 1;
  margin-top: 10px;
  border: 1px solid #a0a0a0;
}
.grid { width: 100%; table-layout: fixed; border-collapse: separate; border-spacing: 0; }
.grid th {
  height: 31px;
  padding: 7px 8px;
  border: solid #c4c4c4;
  border-width: 0 1px 1px 0;
  background: #f0f0f0;
  box-shadow: inset 0 0 0 1px #fff;
  color: #4d4d4d;
  font-weight: normal;
  text-align: left;
  vertical-align: top;
}
.grid th:last-child { border-right: 0; padding-right: 0; }
.grid td {
  height: 29px;
  padding: 1px 8px 0;
  border-bottom: 1px solid #e0e0e0;
  overflow: hidden;
  white-space: nowrap;
  text-overflow: ellipsis;
}
.grid td svg { width: 16px; height: 10px; }
.grid-accounts th { height: 49px; }
.shade td { background: #fafafa; }
.grid .selected td {
  border-right: 1px solid #fff;
  background: #fff1c4;
  box-shadow: inset 0 1px 0 #fff, inset 0 -1px 0 #fff;
}
.grid .selected td:last-child { border-right: 0; }
.grid .selected .current { background: #ffe48f; box-shadow: inset 0 0 0 2px #fcc81e; }
.sorted { display: flex; justify-content: space-between; padding-right: 5px; }
.sorted svg { width: 8px; height: 12px; margin-top: 1px; }
.node { display: flex; align-items: center; padding-left: 5px; }
.grid .tree, .tree { width: 6px; height: 8px; }
.grid .folder { width: 16px; height: 14px; margin: 0 9px 0 8px; }
.c-name { width: 504px; }
.c-inn { width: 137px; }
.c-org { width: 163px; }
.c-agent { width: 106px; }
.c-deal { width: 87px; }
.c-kind { width: 228px; }
.c-a1 { width: 157px; }
.c-a2 { width: 129px; }
.c-a3 { width: 154px; }

.grid-foot { display: flex; align-items: center; height: 21px; padding-left: 18px; }
.track { flex: 1; height: 8px; margin-right: 9px; border-radius: 4px; background: #d6d6d6; }
.thumb { width: 61%; height: 8px; border-radius: 4px; background: #999; }
.pager { display: flex; height: 21px; margin-left: 27px; border-top: 1px solid #a0a0a0; }
.pager button { width: 24px; border-left: 1px solid #a0a0a0; }
.pager svg { width: 10px; height: 8px; }

/* Record form */
.form { background: #fff; padding: 10px 19px 10px 12px; }
.form h2 { font-size: 19px; line-height: 24px; color: #000; }
.form h3 { margin: 10px 0 5px; font-size: 16px; line-height: 16px; color: #1a9a50; }
.form .toolbar { margin-bottom: 10px; }
.row { display: flex; align-items: center; height: 25px; margin-bottom: 9px; color: #4d4d4d; }
.row label { width: 91px; white-space: nowrap; }
.row-account label { width: 239px; }
.row.row-marked {
  height: 27px;
  margin-bottom: 0;
  padding-bottom: 2px;
  outline: 3px solid #eb4a46;
  outline-offset: 2px;
}
.field {
  display: flex;
  align-items: center;
  flex: 1;
  height: 25px;
  border: 1px solid #a0a0a0;
  border-radius: 3px;
  color: #333;
}
.field input { flex: 1; width: 0; min-width: 0; height: 23px; border: 0; padding: 0 3px; background: none; outline: 0; }
.field button { width: 21px; height: 23px; border-left: 1px solid #a0a0a0; }
.open { width: 10px; height: 10px; }
.field-focus { position: relative; border-color: #fff; outline: 2px solid #fcc81e; outline-offset: 1px; border-radius: 0; }
.cursor { position: absolute; left: 3px; top: 3px; width: 1px; height: 16px; background: #000; }

/* Pointer from the selected row to the form */
.pointer {
  position: absolute;
  left: 566px;
  top: 575px;
  width: 32px;
  height: 124px;
  filter: drop-shadow(2px 2px 2px rgba(0,0,0,.4));
}
```
